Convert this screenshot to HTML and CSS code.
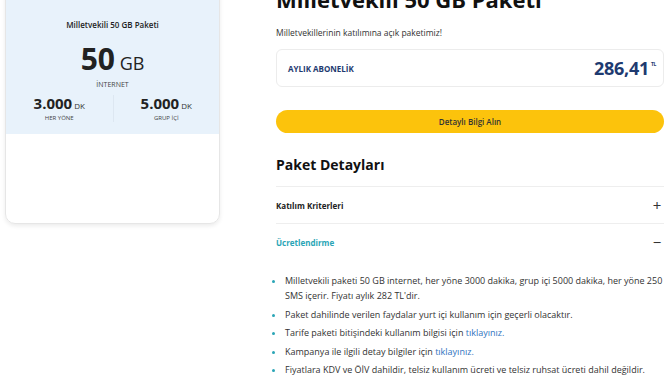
FILE: index.html
```html
<!DOCTYPE html>
<html lang="tr">
<head>
    <meta charset="UTF-8">
    <title>Milletvekili 50 GB Paketi</title>
    <link rel="stylesheet" href="styles.css">
</head>
<body>
<div class="page">
    <div class="side">
        <div class="card">
            <div class="card-top">
                <div class="card-title">Milletvekili 50 GB Paketi</div>
                <div class="gb"><b>50</b> GB</div>
                <div class="gb-label">İNTERNET</div>
                <div class="mins">
                    <div class="min">
                        <div class="min-val"><b>3.000</b> DK</div>
                        <div class="min-label">HER YÖNE</div>
                    </div>
                    <div class="min">
                        <div class="min-val"><b>5.000</b> DK</div>
                        <div class="min-label">GRUP İÇİ</div>
                    </div>
                </div>
            </div>
            <div class="card-bottom"></div>
        </div>
    </div>

    <div class="main">
        <h1>Milletvekili 50 GB Paketi</h1>
        <p class="intro">Milletvekillerinin katılımına açık paketimiz!</p>

        <div class="price-box">
            <span class="price-label">AYLIK ABONELİK</span>
            <span class="price">286,41<sup>TL</sup></span>
        </div>

        <button class="cta">Detaylı Bilgi Alın</button>

        <h2>Paket Detayları</h2>

        <div class="acc">
            <div class="acc-head">Katılım Kriterleri <span class="sign">+</span></div>
        </div>
        <div class="acc open">
            <div class="acc-head">Ücretlendirme <span class="sign">−</span></div>
            <ul class="acc-body">
                <li>Milletvekili paketi 50 GB internet, her yöne 3000 dakika, grup içi 5000 dakika, her yöne 250 SMS içerir. Fiyatı aylık 282 TL'dir.</li>
                <li>Paket dahilinde verilen faydalar yurt içi kullanım için geçerli olacaktır.</li>
                <li>Tarife paketi bitişindeki kullanım bilgisi için <a href="#">tıklayınız.</a></li>
                <li>Kampanya ile ilgili detay bilgiler için <a href="#">tıklayınız.</a></li>
                <li>Fiyatlara KDV ve ÖİV dahildir, telsiz kullanım ücreti ve telsiz ruhsat ücreti dahil değildir.</li>
            </ul>
        </div>
    </div>
</div>
</body>
</html>
```

FILE: styles.css
```css
body {
    margin: 0;
    background: #fff;
    font-family: "Open Sans", sans-serif;
    color: #222;
}
.page {
    display: flex;
    gap: 56px;
    padding-left: 5px;
}
.side {
    width: 215px;
    flex: none;
}
.card {
    margin-top: -10px;
    height: 232px;
    border: 1px solid #e6e6e6;
    border-radius: 0 0 10px 10px;
    box-shadow: 0 2px 4px rgba(0, 0, 0, 0.08);
    overflow: hidden;
    display: flex;
    flex-direction: column;
}
.card-top {
    background: #e8f2fb;
    height: 143px;
    text-align: center;
    padding-top: 28px;
    box-sizing: border-box;
}
.card-title {
    font-size: 8px;
    font-weight: 600;
    color: #222;
}
.gb {
    margin-top: 14px;
    font-size: 18px;
    color: #222;
    line-height: 30px;
}
.gb b {
    font-size: 30px;
    font-weight: 700;
}
.gb-label {
    font-size: 7px;
    color: #444;
    margin-top: 2px;
}
.mins {
    display: grid;
    grid-template-columns: 1fr 1fr;
    margin-top: 6px;
}
.min + .min {
    border-left: 1px solid #dde7f1;
}
.min-val {
    font-size: 8px;
    color: #333;
    line-height: 17px;
}
.min-val b {
    font-size: 15px;
    font-weight: 700;
    color: #222;
}
.min-label {
    font-size: 6px;
    color: #444;
}
.main {
    width: 388px;
}
h1 {
    margin: -16px 0 0;
    font-size: 22px;
    font-weight: 700;
    line-height: 30px;
    color: #111;
}
.intro {
    margin: 13px 0 0;
    font-size: 8.5px;
    color: #333;
}
.price-box {
    margin-top: 11px;
    height: 38px;
    border: 1px solid #ececec;
    border-radius: 6px;
    display: flex;
    align-items: center;
    justify-content: space-between;
    padding: 0 7px 0 11px;
    box-sizing: border-box;
}
.price-label {
    font-size: 8px;
    font-weight: 700;
    color: #1e3a70;
}
.price {
    font-size: 18px;
    font-weight: 700;
    color: #1e3a70;
    letter-spacing: -0.3px;
}
.price sup {
    font-size: 5px;
    vertical-align: 9px;
    margin-left: 2px;
}
.cta {
    display: block;
    width: 100%;
    margin-top: 23px;
    height: 23px;
    border: 0;
    border-radius: 12px;
    background: #fcc30c;
    font-family: inherit;
    font-size: 8px;
    font-weight: 600;
    color: #333;
}
h2 {
    margin: 22px 0 0;
    font-size: 14px;
    font-weight: 700;
    color: #111;
    line-height: 20px;
    padding-bottom: 11px;
    border-bottom: 1px solid #eee;
}
.acc {
    border-bottom: 1px solid #eee;
}
.acc.open {
    border-bottom: 0;
}
.acc-head {
    display: flex;
    justify-content: space-between;
    align-items: center;
    height: 36px;
    font-size: 8px;
    font-weight: 700;
    color: #222;
}
.open .acc-head {
    color: #2aa5b6;
}
.sign {
    font-size: 15px;
    font-weight: 400;
    color: #333;
    width: 14px;
    text-align: center;
}
.acc-body {
    margin: 13px 0 0;
    padding: 0 0 0 9px;
    font-size: 9px;
    color: #333;
    line-height: 15px;
}
.acc-body li {
    margin-bottom: 3.5px;
}
.acc-body li::marker {
    color: #2aa5b6;
}
.acc-body a {
    color: #2f74c0;
    text-decoration: none;
}
```
